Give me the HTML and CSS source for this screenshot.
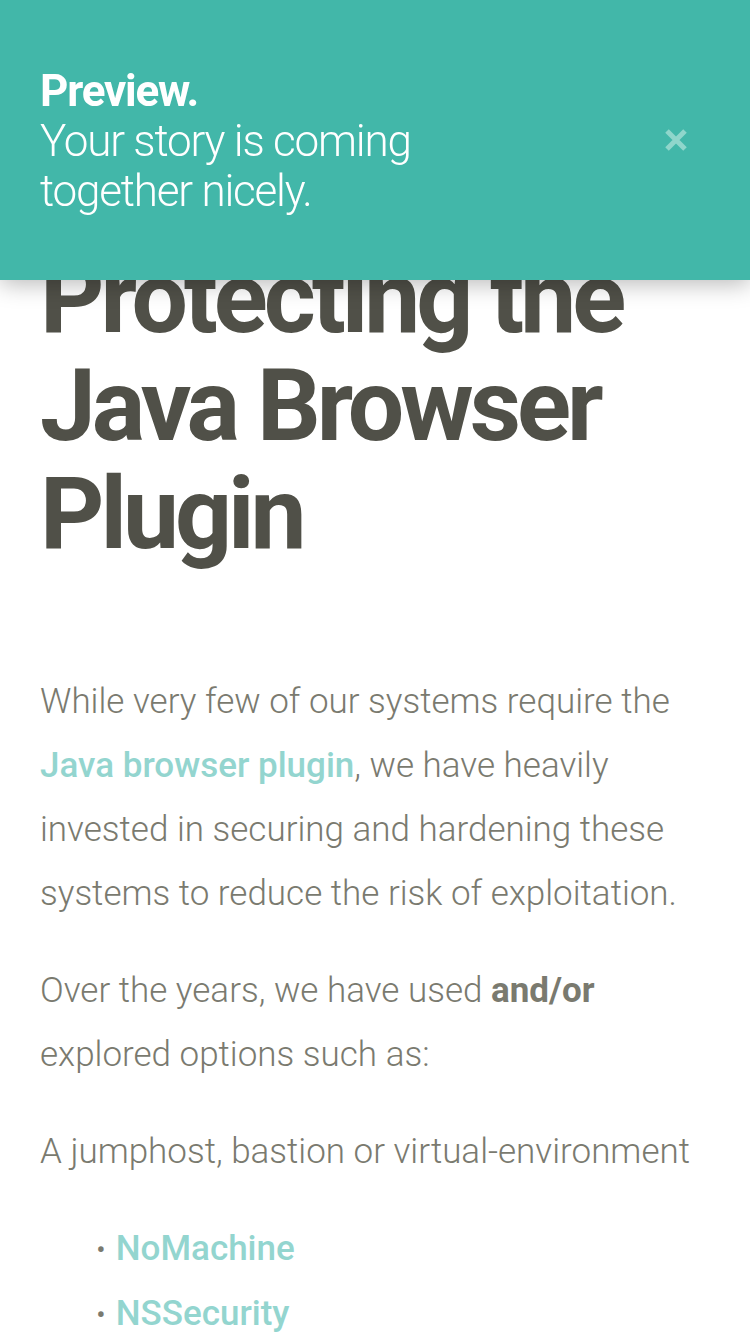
FILE: index.html
```html
<!DOCTYPE html>
<html lang="en">
<head>
<meta charset="utf-8">
<link rel="stylesheet" href="styles.css">
</head>
<body>
<div class="banner">
  <div class="banner-text">
    <strong class="banner-title">Preview.</strong>
    <span class="banner-msg">Your story is coming together nicely.</span>
  </div>
  <button class="close" aria-label="Close">
    <svg width="24" height="24" viewBox="0 0 24 24"><path d="M3 3 L21 21 M21 3 L3 21" stroke="#8fd6cb" stroke-width="5" stroke-linecap="butt"/></svg>
  </button>
</div>
<main class="article">
  <h1 class="title">Protecting the Java Browser Plugin</h1>
  <p class="para">While very few of our systems require the <a class="link" href="#">Java browser plugin</a>, we have heavily invested in securing and hardening these systems to reduce the risk of exploitation.</p>
  <p class="para">Over the years, we have used <strong class="em">and/or</strong> explored options such as:</p>
  <p class="para">A jumphost, bastion or virtual-environment</p>
  <ul class="list">
    <li class="item"><a class="link" href="#">NoMachine</a></li>
    <li class="item"><a class="link" href="#">NSSecurity</a></li>
  </ul>
</main>
</body>
</html>
```
FILE: styles.css
```css
html, body {
  margin: 0;
  padding: 0;
  background: #ffffff;
}
body {
  font-family: Roboto, "Liberation Sans", sans-serif;
  width: 750px;
  height: 1334px;
  overflow: hidden;
}
.banner {
  position: fixed;
  top: 0;
  left: 0;
  right: 0;
  height: 280px;
  box-sizing: border-box;
  background: #42b7a9;
  padding: 66px 40px 0 40px;
  display: flex;
  justify-content: space-between;
  align-items: flex-start;
  box-shadow: 0 4px 22px rgba(0,0,0,0.28);
  z-index: 10;
}
.banner-text {
  color: #ffffff;
  font-size: 44px;
  line-height: 50px;
  max-width: 440px;
  letter-spacing: -1.2px;
}
.banner-title {
  display: block;
  font-weight: 700;
}
.banner-msg {
  display: block;
  font-weight: 300;
}
.close {
  background: none;
  border: 0;
  padding: 0;
  margin: 62px 22px 0 0;
  width: 24px;
  height: 24px;
  cursor: pointer;
}
.close svg { display: block; }
.article {
  padding: 244px 40px 0 40px;
}
.title {
  margin: 0 0 102px 0;
  font-size: 100px;
  line-height: 108px;
  font-weight: 700;
  color: #505048;
  letter-spacing: -4px;
}
.para {
  margin: 0 0 33px 0;
  font-size: 35px;
  line-height: 64px;
  font-weight: 300;
  color: #7a7a6f;
}
.link {
  color: #93d5cf;
  font-weight: 500;
  text-decoration: none;
}
.em {
  font-weight: 700;
}
.list {
  list-style: none;
  margin: 0;
  padding: 0 0 0 56px;
}
.item {
  font-size: 35px;
  line-height: 64px;
  color: #7a7a6f;
  font-weight: 300;
}
.item::before {
  content: "•";
  margin-right: 10px;
  font-size: 30px;
}
```
